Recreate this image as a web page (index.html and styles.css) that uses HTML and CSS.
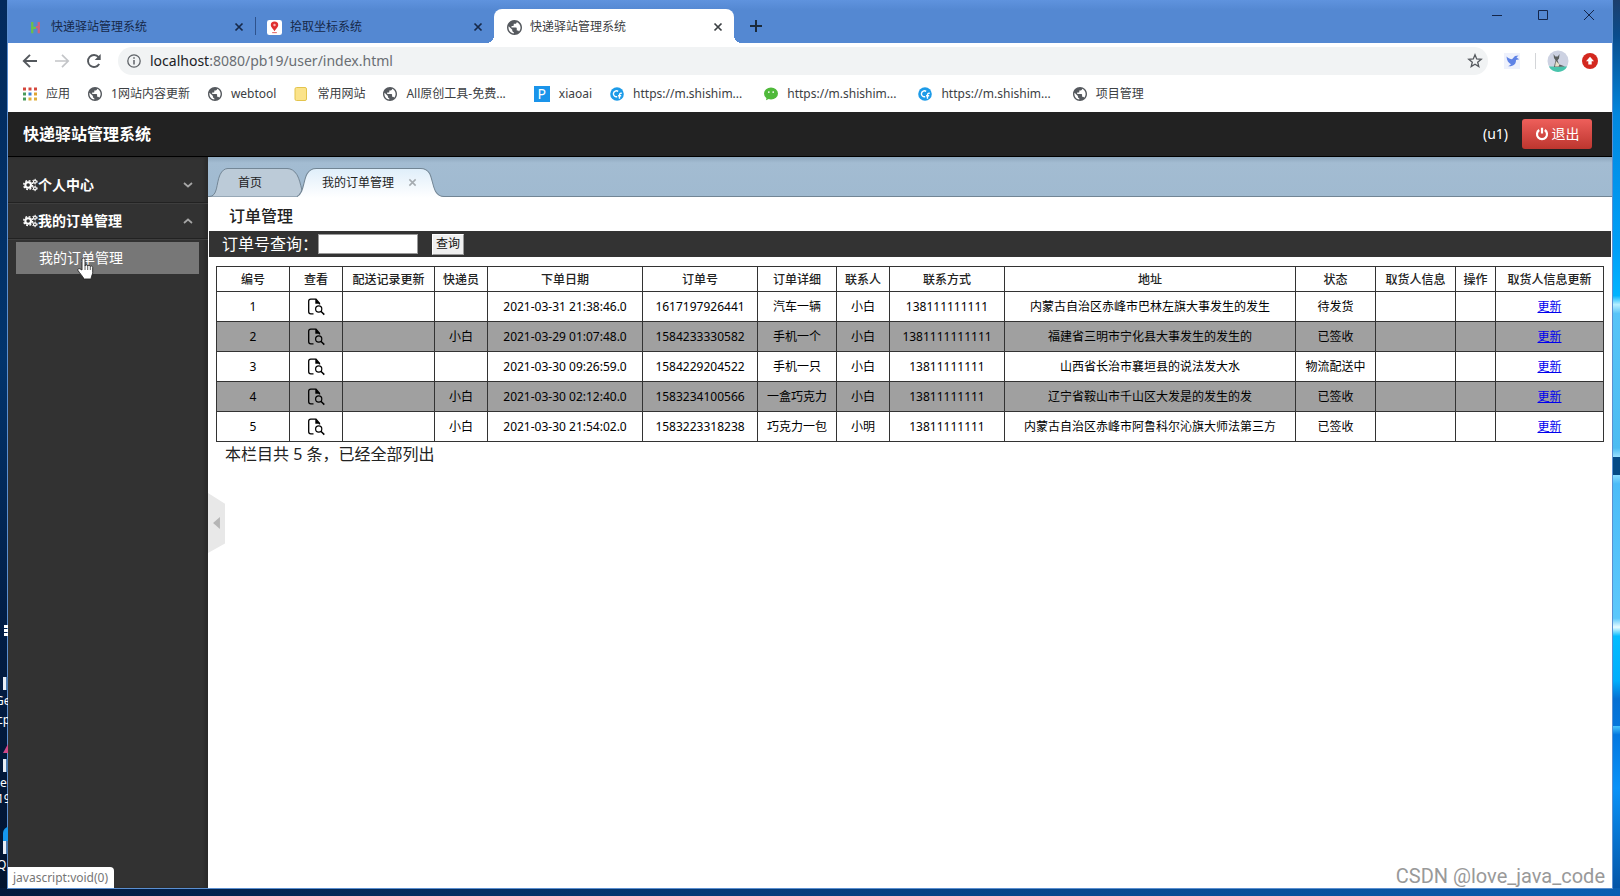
FILE: index.html
```html
<!DOCTYPE html>
<html lang="zh-CN">
<head>
<meta charset="utf-8">
<title>快递驿站管理系统</title>
<link rel="stylesheet" href="styles.css">
</head>
<body>
<svg class="defs" aria-hidden="true">
  <symbol id="globe" viewBox="2 2 20 20"><path d="M12 2C6.480 2 2 6.480 2 12s4.480 10 10 10 10-4.480 10-10S17.520 2 12 2zm-1 17.930c-3.950-.49-7-3.850-7-7.930 0-.62.08-1.210.21-1.790L9 15v1c0 1.100.9 2 2 2v1.930zm6.900-2.540c-.26-.81-1-1.390-1.900-1.390h-1v-3c0-.55-.45-1-1-1H8v-2h2c.55 0 1-.45 1-1V7h2c1.100 0 2-.9 2-2v-.41c2.930 1.190 5 4.060 5 7.410 0 2.080-.8 3.970-2.100 5.390z" fill="#55595e"/></symbol>
  <symbol id="cog" viewBox="0 0 16 14"><g fill="none" stroke="#fff"><circle cx="5.500" cy="7" r="3" stroke-width="2.200"/><circle cx="5.500" cy="7" r="4.700" stroke-width="1.600" stroke-dasharray="2 1.690"/><circle cx="12.700" cy="3.400" r="1.500" stroke-width="1.300"/><circle cx="12.700" cy="3.400" r="2.500" stroke-width="1" stroke-dasharray="1.200 1.420"/><circle cx="12.700" cy="10.600" r="1.500" stroke-width="1.300"/><circle cx="12.700" cy="10.600" r="2.500" stroke-width="1" stroke-dasharray="1.200 1.420"/></g></symbol>
  <symbol id="x" viewBox="0 0 10 10"><path d="M1.500 1.500l7 7M8.500 1.500l-7 7" fill="none" stroke="currentColor" stroke-width="1.700"/></symbol>
  <symbol id="cf" viewBox="0 0 16 16"><circle cx="8" cy="8" r="7.800" fill="#1d9be8"/><path d="M9.300 5A3.400 3.400 0 1 0 8.300 11M13.500 7.300c-1.800-.7-2.700.3-2.700 2v4M9.200 10h3.600" fill="none" stroke="#fff" stroke-width="1.600"/></symbol>
  <symbol id="view" viewBox="0 0 18 18"><path d="M6.500 15.800H3.700Q1.700 15.800 1.700 13.800V3.200Q1.700 1.200 3.700 1.200H9L12.500 5.200V6.500" fill="none" stroke="currentColor" stroke-width="1.300"/><path d="M8.300 1v4.700h4.700z" fill="currentColor"/><circle cx="11.700" cy="11" r="3.100" fill="none" stroke="currentColor" stroke-width="1.200"/><path d="M13.900 13.300l3.400 3.300" stroke="currentColor" stroke-width="1.500"/></symbol>
</svg>
<div class="desktop">
  <div class="desk-icons" aria-hidden="true">
    <i class="desk-dots"></i><i class="desk-arrow a1"></i><span class="l1">Ge</span><span class="l2">cp</span>
    <i class="desk-pink"></i><i class="desk-arrow a2"></i><span class="l3">e</span><span class="l4">19</span>
    <i class="desk-blue"></i><i class="desk-arrow a3"></i><span class="l5">Q</span>
  </div>
  <div class="window">
    <div class="tabbar">
      <div class="btab first"><svg class="fav" viewBox="0 0 16 16"><path d="M4.500 2v12M4.500 8.500h4" stroke="#6cc04a" stroke-width="2.400" fill="none"/><path d="M11.500 2v12M8.500 7.500h3" stroke="#d0607c" stroke-width="2.400" fill="none"/></svg><span>快递驿站管理系统</span><button aria-label="关闭"><svg><use href="#x"/></svg></button></div>
      <div class="btab second"><svg class="fav" viewBox="0 0 16 16"><rect width="16" height="16" rx="2.500" fill="#fff"/><path d="M8 1.500a4 4 0 0 1 4 4c0 2-2.500 3.500-4 6.500-1.500-3-4-4.500-4-6.500a4 4 0 0 1 4-4z" fill="#e02f2f"/><circle cx="8" cy="5.300" r="1.300" fill="#f7b4b4"/><path d="M5.500 13.500h5" stroke="#d55" stroke-width="1"/></svg><span>拾取坐标系统</span><button aria-label="关闭"><svg><use href="#x"/></svg></button></div>
      <div class="btab active"><svg class="fav"><use href="#globe"/></svg><span>快递驿站管理系统</span><button aria-label="关闭"><svg><use href="#x"/></svg></button></div>
      <button class="newtab" aria-label="新标签页"><svg viewBox="0 0 12 12"><path d="M6 0v12M0 6h12" stroke="#1b2a3a" stroke-width="2"/></svg></button>
      <div class="winbtns">
        <button aria-label="最小化"><svg viewBox="0 0 12 12"><path d="M1 6.500h10" stroke="#14264a"/></svg></button>
        <button aria-label="最大化"><svg viewBox="0 0 12 12"><path d="M1.500 1.500h9v9h-9z" fill="none" stroke="#14264a"/></svg></button>
        <button aria-label="关闭窗口"><svg viewBox="0 0 12 12"><path d="M1 1l10 10M11 1L1 11" stroke="#14264a"/></svg></button>
      </div>
    </div>
    <div class="toolbar">
      <button aria-label="后退"><svg viewBox="0 0 16 16"><path d="M15 8H2M8 1.800L1.800 8 8 14.200" fill="none" stroke="#54585d" stroke-width="1.900"/></svg></button>
      <button aria-label="前进"><svg viewBox="0 0 16 16"><path d="M1 8h13M8 1.800L14.200 8 8 14.200" fill="none" stroke="#c3c5c8" stroke-width="1.700"/></svg></button>
      <button aria-label="刷新"><svg viewBox="0 0 16 16"><path d="M13.200 11A6 6 0 1 1 12.600 4.100" fill="none" stroke="#54585d" stroke-width="1.900"/><path d="M14.700 1v6h-6z" fill="#54585d"/></svg></button>
      <div class="omni"><svg viewBox="0 0 14 14"><circle cx="7" cy="7" r="6.200" fill="none" stroke="#5f6368" stroke-width="1.300"/><path d="M7 6v4.500M7 3.300v1.500" stroke="#5f6368" stroke-width="1.500"/></svg><span class="url"><b>localhost</b>:8080/pb19/user/index.html</span><svg class="star" viewBox="0 0 16 16"><path d="M8 1.800l1.700 4.200 4.500.3-3.500 2.900 1.100 4.400L8 11.200l-3.800 2.400 1.100-4.400-3.500-2.900 4.500-.3z" fill="none" stroke="#55595e" stroke-width="1.300"/></svg></div>
      <div class="ext">
        <svg class="bird" viewBox="0 0 16 16"><rect width="16" height="16" fill="#eef1fc"/><path d="M2.500 3.500c2 2 3.800 2.700 5.500 2.700L11 3l3.500-.6-2 2.200 2.700 1.700-3.200.6c.2 4-2.400 6.600-7.800 6.300 1.200-.5 2.200-1.200 2.800-2C4.500 10 2.800 7.500 2.500 3.500z" fill="#5f83e6"/></svg>
        <i></i>
        <svg class="avatar" viewBox="0 0 22 22"><circle cx="11" cy="11" r="10.500" fill="#cdd2e2"/><path d="M1.800 16.500a10.500 10.500 0 0 0 18.400 0z" fill="#48c4ac"/><path d="M6.500 4l1.800 2.500h2.500L12.500 4l-.5 4.500-1.500 1.700 1.500 4 6 2.300-11 .4 1.500-6.700L7 8z" fill="#5b5f5e"/><path d="M9 11l3.500 3.500-1 2H8z" fill="#e6dfc8"/></svg>
        <svg class="up" viewBox="0 0 16 16"><circle cx="8" cy="8" r="8" fill="#d3281f"/><path d="M8 3.800l4 4.500H9.700v3.300H6.300V8.300H4z" fill="#fff"/></svg>
      </div>
    </div>
    <nav class="bookmarks">
      <a href="#"><svg viewBox="0 0 14 14"><path d="M0 2h14" stroke="#d5473c" stroke-width="3" stroke-dasharray="3 2.500"/><path d="M0 7h3" stroke="#4a9a5b" stroke-width="3"/><path d="M5.500 7h3" stroke="#3d7fd0" stroke-width="3"/><path d="M11 7h3" stroke="#e0a32e" stroke-width="3"/><path d="M0 12h3" stroke="#4a9a5b" stroke-width="3"/><path d="M5.500 12H14" stroke="#dfae3a" stroke-width="3" stroke-dasharray="3 2.500"/></svg>应用</a>
      <a href="#"><svg><use href="#globe"/></svg>1网站内容更新</a>
      <a href="#"><svg><use href="#globe"/></svg>webtool</a>
      <a href="#"><svg viewBox="0 0 14 14"><rect x="1" y=".5" width="11.500" height="13" rx="1.500" fill="#fbe38a" stroke="#e3c44d"/></svg>常用网站</a>
      <a href="#" class="wide"><svg><use href="#globe"/></svg>All原创工具-免费...</a>
      <a href="#"><i class="pbox">P</i>xiaoai</a>
      <a href="#" class="long"><svg><use href="#cf"/></svg>https://m.shishim...</a>
      <a href="#" class="long"><svg viewBox="0 0 16 16"><ellipse cx="8" cy="7.500" rx="8" ry="6.800" fill="#4fb93a"/><path d="M3 12l-.8 3L6 13.500z" fill="#4fb93a"/><circle cx="5.500" cy="5.800" r="1" fill="#fff"/><circle cx="10.500" cy="5.800" r="1" fill="#fff"/></svg>https://m.shishim...</a>
      <a href="#" class="long"><svg><use href="#cf"/></svg>https://m.shishim...</a>
      <a href="#"><svg><use href="#globe"/></svg>项目管理</a>
    </nav>
    <header class="head">
      <h1>快递驿站管理系统</h1>
      <span class="user">(u1)</span>
      <button class="logout"><svg viewBox="0 0 14 14"><path d="M4.200 3A5 5 0 1 0 9.800 3M7 .8v5.700" fill="none" stroke="#fff" stroke-width="2.200"/></svg>退出</button>
    </header>
    <div class="body">
      <aside class="side">
        <button class="group"><svg class="cog"><use href="#cog"/></svg><span>个人中心</span><svg class="chev" viewBox="0 0 10 6"><path d="M1 1l4 3.500L9 1" fill="none" stroke="#a6a6a6" stroke-width="1.700"/></svg></button>
        <button class="group"><svg class="cog"><use href="#cog"/></svg><span>我的订单管理</span><svg class="chev" viewBox="0 0 10 6"><path d="M1 5l4-3.500L9 5" fill="none" stroke="#a6a6a6" stroke-width="1.700"/></svg></button>
        <a class="sub" href="#">我的订单管理<svg class="hand" viewBox="0 0 17 23"><path d="M5 13V2.500a1.500 1.500 0 0 1 3 0V9c0-1.500 2.600-1.500 2.700 0 .2-1 2.500-.9 2.600.5.400-.8 2.400-.6 2.400 1v5c0 2-1.200 3-1.500 5.500v1H6.500v-1C5 18.500 3 16.500 1 13.500c-.8-1.500 1-2.500 2.200-1.500z" fill="#fff" stroke="#222" stroke-width=".9"/><path d="M8 9v4M10.700 9v4M13.300 9.500V13" stroke="#333" stroke-width=".8"/></svg></a>
        <div class="status">javascript:void(0)</div>
      </aside>
      <main class="main">
        <div class="ptabs">
          <svg class="shape s1" viewBox="0 0 98 31" preserveAspectRatio="none"><path d="M0 29.500C9 29.500 7 16 11 7Q14 .5 19 .5H78Q84 .5 88 7C93 16 92 29.500 98 29.500" fill="#bccbd8" stroke="#728594"/></svg>
          <a class="ptab p1" href="#">首页</a>
          <div class="ptab p2"><svg class="shape s2" viewBox="0 0 148 31" preserveAspectRatio="none"><defs><linearGradient id="g" x2="0" y2="1"><stop stop-color="#dfeefa"/><stop offset="1" stop-color="#fff"/></linearGradient></defs><path d="M0 31C8 26 7 13 11 6Q14 .5 20 .5H123Q129 .5 132 6C136 15 135 29.500 146 29.500H148V31z" fill="url(#g)"/><path d="M1 29.500C8 26 7 13 11 6Q14 .5 20 .5H123Q129 .5 132 6C136 15 135 29.500 146 29.500H148" fill="none" stroke="#728594"/></svg><a href="#">我的订单管理</a><button aria-label="关闭"><svg><use href="#x"/></svg></button></div>
        </div>
        <h2>订单管理</h2>
        <form class="search"><label for="q">订单号查询：</label><input id="q" type="text"><button type="button">查询</button></form>
        <table>
          <colgroup><col class="c73"><col class="c53"><col class="c92"><col class="c53"><col class="c155"><col class="c115"><col class="c79"><col class="c53"><col class="c115"><col><col class="c80"><col class="c80"><col class="c40"><col class="c108"></colgroup>
          <thead><tr><th>编号</th><th>查看</th><th>配送记录更新</th><th>快递员</th><th>下单日期</th><th>订单号</th><th>订单详细</th><th>联系人</th><th>联系方式</th><th>地址</th><th>状态</th><th>取货人信息</th><th>操作</th><th>取货人信息更新</th></tr></thead>
          <tbody>
          <tr><td>1</td><td><svg><use href="#view"/></svg></td><td></td><td></td><td>2021-03-31 21:38:46.0</td><td>1617197926441</td><td>汽车一辆</td><td>小白</td><td>138111111111</td><td>内蒙古自治区赤峰市巴林左旗大事发生的发生</td><td>待发货</td><td></td><td></td><td><a href="#">更新</a></td></tr>
          <tr><td>2</td><td><svg><use href="#view"/></svg></td><td></td><td>小白</td><td>2021-03-29 01:07:48.0</td><td>1584233330582</td><td>手机一个</td><td>小白</td><td>1381111111111</td><td>福建省三明市宁化县大事发生的发生的</td><td>已签收</td><td></td><td></td><td><a href="#">更新</a></td></tr>
          <tr><td>3</td><td><svg><use href="#view"/></svg></td><td></td><td></td><td>2021-03-30 09:26:59.0</td><td>1584229204522</td><td>手机一只</td><td>小白</td><td>13811111111</td><td>山西省长治市襄垣县的说法发大水</td><td>物流配送中</td><td></td><td></td><td><a href="#">更新</a></td></tr>
          <tr><td>4</td><td><svg><use href="#view"/></svg></td><td></td><td>小白</td><td>2021-03-30 02:12:40.0</td><td>1583234100566</td><td>一盒巧克力</td><td>小白</td><td>13811111111</td><td>辽宁省鞍山市千山区大发是的发生的发</td><td>已签收</td><td></td><td></td><td><a href="#">更新</a></td></tr>
          <tr><td>5</td><td><svg><use href="#view"/></svg></td><td></td><td>小白</td><td>2021-03-30 21:54:02.0</td><td>1583223318238</td><td>巧克力一包</td><td>小明</td><td>13811111111</td><td>内蒙古自治区赤峰市阿鲁科尔沁旗大师法第三方</td><td>已签收</td><td></td><td></td><td><a href="#">更新</a></td></tr>
          </tbody>
        </table>
        <p class="total">本栏目共 5 条，已经全部列出</p>
        <button class="collapse" aria-label="收起侧栏"><svg viewBox="0 0 8 14"><path d="M8 0v14L0 7z" fill="#b5b5b5"/></svg></button>
        <div class="mark">CSDN @love_java_code</div>
      </main>
    </div>
  </div>
</div>
</body>
</html>
```

FILE: styles.css
```css
* { box-sizing: border-box; }
body { margin: 0; font: 12px/16px "Noto Sans", "Noto Sans CJK SC", sans-serif; color: #222; }
button { border: 0; padding: 0; background: none; font: inherit; color: inherit; }
svg { display: block; flex: none; }
.defs { position: absolute; width: 0; height: 0; }

.desktop {
  position: relative; display: flex; min-height: 100vh; padding: 0 8px 8px; overflow: hidden;
  background:
    linear-gradient(90deg, #02193c, #053a78 45%, #0a5fb2) bottom / 100% 8px no-repeat,
    linear-gradient(#1d3f6c 0, #0a4c8c 4%, #0288e0 13%, #00a0f8 28%, #00b4ff 33%, #b8f0ff 34%, #57c4f8 35%, #4cbcf2 50%, #9ae0ff 51%, #054a86 51%, #054a86 53%, #8adcff 53%, #4cbcf8 54%, #5cc8fc 69%, #e8fcff 70%, #04bcff 71%, #00aefc 76%, #0670d2 78%, #0476dc 81%, #48c8ff 81%, #0478e0 82%, #0a92f8 88%, #0450a0 100%) right / 8px 100% no-repeat,
    linear-gradient(#022a5c, #02346c 40%, #021d44 70%, #021430) left / 8px 100% no-repeat;
}
.desk-icons { position: absolute; left: 0; top: 0; width: 8px; height: 100%; overflow: hidden; color: #fff; }
.desk-icons span, .desk-icons i { position: absolute; }
.desk-dots { left: 4px; top: 625px; width: 4px; height: 12px; background: repeating-linear-gradient(#fff 0 3px, transparent 3px 4px); }
.desk-arrow { left: 3px; width: 5px; height: 13px; background: #e8eef6; border-right: 2px solid #4a7ab0; }
.a1 { top: 677px; }
.a2 { top: 759px; }
.a3 { top: 841px; }
.l1 { left: -5px; top: 693px; }
.l2 { left: -3px; top: 712px; }
.l3 { left: 0; top: 775px; }
.l4 { left: -3px; top: 791px; }
.l5 { left: -3px; top: 857px; }
.desk-pink { left: 3px; top: 744px; width: 5px; height: 9px; background: #d04888; clip-path: polygon(100% 0, 100% 100%, 0 100%); }
.desk-blue { left: 3px; top: 827px; width: 12px; height: 24px; border-radius: 8px; background: #1597ee; }

.window { flex: 1; min-width: 0; display: flex; flex-direction: column; background: #fff; box-shadow: 0 0 0 1px #5b8fd0; }

.tabbar { display: flex; align-items: flex-end; height: 43px; background: linear-gradient(#5f93de, #5488d2 10px); }
.btab { display: flex; align-items: center; height: 34px; padding: 2px 11px 0 20px; color: #16294a; }
.btab .fav { width: 15px; height: 15px; margin-right: 8px; }
.btab span { flex: 1; white-space: nowrap; }
.btab button svg { width: 10px; height: 10px; }
.first { width: 247px; }
.second { width: 239px; padding-left: 12px; position: relative; }
.second::before { content: ""; position: absolute; left: 0; top: 8px; width: 1px; height: 18px; background: #2e528c; }
.active { position: relative; width: 240px; padding: 2px 11px 0 13px; background: #fff; border-radius: 8px 8px 0 0; color: #3c4043; }
.active::before, .active::after { content: ""; position: absolute; bottom: 0; width: 8px; height: 8px; }
.active::before { left: -8px; background: radial-gradient(circle at 0 0, transparent 8px, #fff 8px); }
.active::after { right: -8px; background: radial-gradient(circle at 100% 0, transparent 8px, #fff 8px); }
.newtab { align-self: center; margin: 9px 0 0 16px; }
.newtab svg { width: 12px; height: 12px; }
.winbtns { display: flex; gap: 34px; margin: 0 17px 22px auto; }
.winbtns svg { width: 12px; height: 12px; }

.toolbar { display: flex; align-items: center; height: 36px; padding: 0 14px; gap: 16px; }
.toolbar > button svg { width: 16px; height: 16px; }
.omni { flex: 1; display: flex; align-items: center; height: 28px; padding: 0 5px 0 9px; gap: 9px; background: #f1f3f4; border-radius: 14px; }
.omni svg { width: 14px; height: 14px; }
.omni .star { width: 16px; height: 16px; }
.url { flex: 1; font-size: 14px; line-height: 20px; color: #6a6e73; }
.url b { font-weight: 400; color: #202124; }
.ext { display: flex; align-items: center; }
.bird { width: 16px; height: 16px; }
.ext i { width: 1px; height: 16px; margin: 0 11px 0 15px; background: #d3d5d8; }
.avatar { width: 22px; height: 22px; margin-right: 13px; }
.up { width: 16px; height: 16px; }

.bookmarks { display: flex; align-items: center; height: 33px; padding: 0 15px 4px; }
.bookmarks a { display: flex; align-items: center; gap: 9px; color: #3c4043; text-decoration: none; white-space: nowrap; margin-right: 18px; }
.bookmarks svg { width: 14px; height: 14px; }
.bookmarks .wide { margin-right: 28px; }
.bookmarks .long { margin-right: 22px; }
.pbox { width: 16px; height: 16px; background: #1a94ea; color: #fff; font-style: normal; font-size: 14px; line-height: 16px; text-align: center; }

.head { display: flex; align-items: center; height: 45px; padding: 0 20px 0 15px; background: #222; border-bottom: 1px solid #000; color: #fff; }
.head h1 { flex: 1; margin: 0; font-size: 16px; line-height: 24px; }
.user { font-size: 14px; margin-right: 14px; }
.logout { display: flex; align-items: center; justify-content: center; gap: 3px; width: 70px; height: 30px; border-radius: 3px; background: linear-gradient(#ee5f5b, #bd362f); font-size: 14px; line-height: 20px; color: #fff; }
.logout svg { width: 14px; height: 14px; }

.body { flex: 1; display: flex; }
.side { position: relative; width: 200px; flex: none; padding-top: 10px; background: #323232; box-shadow: inset -3px 0 3px #2a2a2a; color: #fff; }
.group { display: flex; align-items: center; width: 100%; height: 36px; padding: 0 15px; border-bottom: 1px solid #222; box-shadow: 0 1px #3e3e3e; font-size: 14px; line-height: 20px; font-weight: 700; }
.group span { flex: 1; text-align: left; }
.cog { width: 15px; height: 14px; }
.chev { width: 10px; height: 6px; }
.sub { position: relative; display: flex; align-items: center; height: 32px; margin: 3px 9px 0 8px; padding-left: 23px; background: #777; color: #fff; font-size: 14px; text-decoration: none; }
.hand { position: absolute; left: 61px; top: 15px; width: 17px; height: 23px; }
.status { position: absolute; left: 0; bottom: 0; height: 21px; padding: 3px 6px 0 5px; background: #fff; border-top-right-radius: 4px; color: #757575; }

.main { position: relative; flex: 1; min-width: 0; }
.ptabs { position: relative; display: flex; align-items: flex-end; height: 40px; background: linear-gradient(#8ea8be, #a3bcd2 6px, #a0bad0); border-bottom: 1px solid #728594; }
.ptab { display: flex; align-items: center; height: 28px; padding-top: 1px; font-size: 12px; color: #222; text-decoration: none; }
.ptab a { color: inherit; text-decoration: none; }
.p1 { position: relative; width: 88px; padding-left: 30px; }
.p2 { position: relative; width: 150px; padding-left: 26px; gap: 14px; }
.p2 a, .p2 button { position: relative; }
.p2 button { color: #a5abb0; }
.p2 button svg { width: 9px; height: 9px; }
.shape { position: absolute; bottom: -2px; height: 30px; }
.s1 { left: 1px; width: 98px; }
.s2 { left: 0; width: 150px; }
.main h2 { margin: 0; padding: 7px 22px 3px 21px; font-size: 16px; line-height: 24px; font-weight: 500; color: #222; }
.search { display: flex; align-items: center; height: 26px; margin: 0 1px; padding-left: 13px; background: #333; color: #fff; font-size: 16px; }
.search input { width: 100px; height: 20px; padding: 0 2px; border: 1px solid #999; background: #fff; }
.search button { width: 32px; height: 21px; margin-left: 14px; border: 1px solid; border-color: #fff #999 #999 #fff; background: #f0f0f0; color: #111; font-size: 12px; }
table { width: calc(100% - 16px); margin: 9px 8px 0; table-layout: fixed; border-collapse: collapse; color: #000; }
th, td { height: 30px; padding: 0; border: 1px solid #333; text-align: center; font-weight: 400; white-space: nowrap; }
th { height: 25px; padding-top: 2px; font-weight: 500; color: #222; }
tbody tr:nth-child(even) { background: #a0a0a0; }
td svg { width: 18px; height: 18px; margin: 0 auto; }
td a { color: #00e; }
.c40 { width: 40px; } .c53 { width: 53px; } .c73 { width: 73px; } .c79 { width: 79px; } .c80 { width: 80px; }
.c92 { width: 92px; } .c108 { width: 108px; } .c115 { width: 115px; } .c155 { width: 155px; }
.total { margin: 0; padding-left: 17px; font-size: 16px; line-height: 24px; }
.collapse { position: absolute; left: 0; top: 336px; width: 17px; height: 60px; padding-left: 5px; background: #e8e8e8; clip-path: polygon(0 0, 100% 18%, 100% 84%, 0 100%); }
.collapse svg { width: 7px; height: 12px; }
.mark { position: absolute; right: 7px; bottom: 0; font: 20px/24px Roboto, sans-serif; color: #999; }
```
